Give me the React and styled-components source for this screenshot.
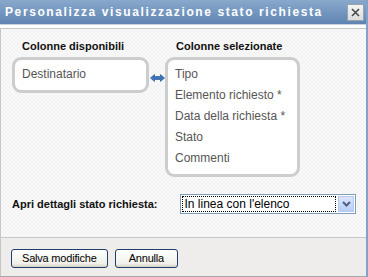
import React from 'react';
import styled, { createGlobalStyle } from 'styled-components';

const Global = createGlobalStyle`
  html, body { margin: 0; padding: 0; background: #ffffff; }
  body { font-family: Tahoma, "DejaVu Sans", "Liberation Sans", sans-serif; }
`;

const Dialog = styled.div`
  width: 368px;
  height: 277px;
  box-sizing: border-box;
  display: flex;
  flex-direction: column;
  background: #ffffff;
  border-right: 2px solid #7fa3cc;
`;

const TitleBar = styled.div`
  height: 24px;
  flex: none;
  display: flex;
  align-items: center;
  justify-content: space-between;
  padding: 0 2px 0 5px;
  background: linear-gradient(#89a8cc, #5f84b3);
  border-bottom: 1px solid #c9d3df;
`;

const Title = styled.div`
  color: #ffffff;
  font: bold 12px "Liberation Sans", Arial, sans-serif;
  letter-spacing: 1.6px;
  white-space: nowrap;
`;

const CloseBtn = styled.div`
  width: 15px;
  height: 15px;
  display: flex;
  align-items: center;
  justify-content: center;
  background: linear-gradient(#f4f4f4, #dcdcdc);
  border: 1px solid #9aa3ad;
`;

const Body = styled.div`
  flex: none;
  height: 210px;
  box-sizing: border-box;
  margin-top: 3px;
  border: 1px solid #c6c6c6;
  border-right: none;
  background-color: #f9f9f9;
  background-image: linear-gradient(45deg, #f3f3f3 25%, transparent 25%, transparent 75%, #f3f3f3 75%),
    linear-gradient(45deg, #f3f3f3 25%, transparent 25%, transparent 75%, #f3f3f3 75%);
  background-size: 4px 4px;
  background-position: 0 0, 2px 2px;
  padding: 11px 10px 0 11px;
`;

const Columns = styled.div`
  display: flex;
  align-items: flex-start;
`;

const Column = styled.div`
  display: flex;
  flex-direction: column;
  width: ${p => p.$w}px;
`;

const ColTitle = styled.div`
  font: bold 11px "Liberation Sans", Arial, sans-serif;
  color: #111;
  padding-left: ${p => p.$pad}px;
  height: 17px;
  line-height: 13px;
`;

const ListBox = styled.div`
  box-sizing: border-box;
  height: ${p => p.$h}px;
  border: 3px solid #cdcdcd;
  border-radius: 9px;
  background: #ffffff;
  padding: 4px 0 0 7px;
`;

const Item = styled.div`
  font: 12px "Liberation Sans", Arial, sans-serif;
  color: #555;
  height: 21px;
  line-height: 21px;
`;

const Swap = styled.div`
  width: 16px;
  height: 36px;
  margin-top: 17px;
  display: flex;
  align-items: center;
  justify-content: center;
  padding-top: 6px;
  box-sizing: border-box;
`;

const FieldRow = styled.div`
  display: flex;
  align-items: center;
  margin-top: 17px;
`;

const FieldLabel = styled.div`
  font: bold 11px "Liberation Sans", Arial, sans-serif;
  color: #111;
  width: 168px;
`;

const Select = styled.div`
  box-sizing: border-box;
  width: 177px;
  height: 20px;
  border: 1px solid #7f9db9;
  background: #fff;
  display: flex;
  padding: 1px;
`;

const SelectValue = styled.div`
  flex: 1;
  border: 1px dotted #000;
  font: 12px "Liberation Sans", Arial, sans-serif;
  color: #000;
  line-height: 14px;
  padding-left: 2px;
  margin-right: 2px;
`;

const SelectArrow = styled.div`
  width: 16px;
  display: flex;
  align-items: center;
  justify-content: center;
  background: linear-gradient(#dbe6fb, #b9cdf5);
  border: 1px solid #b5c8f0;
  box-sizing: border-box;
`;

const Footer = styled.div`
  flex: 1;
  background: #eeedeb;
  border-left: 1px solid #c6c6c6;
  border-bottom: 1px solid #a6a6a6;
  display: flex;
  align-items: center;
  gap: 7px;
  padding: 2px 0 0 10px;
`;

const Button = styled.button`
  height: 19px;
  padding: 0 ${p => p.$pad}px;
  border: 1px solid #1f3e6c;
  border-radius: 3px;
  background: linear-gradient(#ffffff, #f0f0ea 80%, #d6d0c5);
  font: 11px "Liberation Sans", Arial, sans-serif;
  letter-spacing: -0.2px;
  color: #000;
`;

const selected = ['Tipo', 'Elemento richiesto *', 'Data della richiesta *', 'Stato', 'Commenti'];

export default function App() {
  return (
    <>
      <Global />
      <Dialog>
        <TitleBar>
          <Title>Personalizza visualizzazione stato richiesta</Title>
          <CloseBtn>
            <svg width="9" height="9" viewBox="0 0 9 9">
              <path d="M1 1L8 8M8 1L1 8" stroke="#4a4a4a" strokeWidth="1.6" />
            </svg>
          </CloseBtn>
        </TitleBar>
        <Body>
          <Columns>
            <Column $w={137}>
              <ColTitle $pad={10}>Colonne disponibili</ColTitle>
              <ListBox $h={36}>
                <Item>Destinatario</Item>
              </ListBox>
            </Column>
            <Swap>
              <svg width="15" height="8" viewBox="0 0 15 8">
                <path d="M0.5 4L4.5 0.5V2.5H10.5V0.5L14.5 4L10.5 7.5V5.5H4.5V7.5Z" fill="#3d73b8" stroke="#1f4f8f" strokeWidth="0.6" />
              </svg>
            </Swap>
            <Column $w={135}>
              <ColTitle $pad={11}>Colonne selezionate</ColTitle>
              <ListBox $h={120}>
                {selected.map(s => <Item key={s}>{s}</Item>)}
              </ListBox>
            </Column>
          </Columns>
          <FieldRow>
            <FieldLabel>Apri dettagli stato richiesta:</FieldLabel>
            <Select>
              <SelectValue>In linea con l'elenco</SelectValue>
              <SelectArrow>
                <svg width="9" height="6" viewBox="0 0 9 6">
                  <path d="M1 1L4.5 4.5L8 1" stroke="#4d6185" strokeWidth="2" fill="none" />
                </svg>
              </SelectArrow>
            </Select>
          </FieldRow>
        </Body>
        <Footer>
          <Button $pad={10}>Salva modifiche</Button>
          <Button $pad={13}>Annulla</Button>
        </Footer>
      </Dialog>
    </>
  );
}
